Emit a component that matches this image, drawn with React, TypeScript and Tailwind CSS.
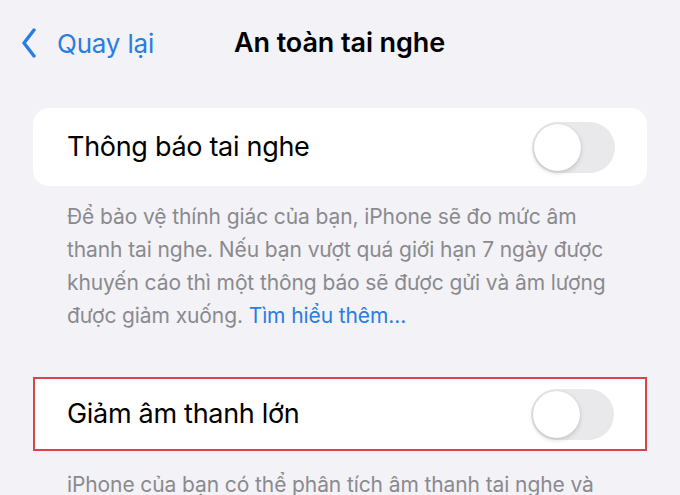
function Toggle() {
  return (
    <div className="relative h-[51px] w-[83px] rounded-full bg-[#e9e9ec]">
      <div className="absolute left-[2px] top-[2px] h-[47px] w-[47px] rounded-full bg-white shadow-[0_2px_5px_rgba(0,0,0,0.16),0_0_1px_rgba(0,0,0,0.12)]" />
    </div>
  );
}

function BackChevron() {
  return (
    <svg width="14" height="30" viewBox="0 0 14 30" fill="none">
      <polyline
        points="12,2 2,15 12,28"
        stroke="currentColor"
        strokeWidth="3.4"
        strokeLinecap="round"
        strokeLinejoin="round"
      />
    </svg>
  );
}

export default function App() {
  return (
    <div className="h-[495px] w-[680px] overflow-hidden bg-[#f2f2f7] font-['Inter',sans-serif]">
      {/* Thanh điều hướng */}
      <div className="flex h-[86px] items-center">
        <div className="ml-[22px] flex items-center text-[#2a7de1]">
          <BackChevron />
          <span className="ml-[21px] text-[26px] tracking-[-0.2px]">Quay lại</span>
        </div>
        <h1 className="ml-[80px] text-[27px] font-semibold tracking-[-0.1px] text-black">
          An toàn tai nghe
        </h1>
      </div>

      {/* Thông báo tai nghe */}
      <div className="mx-[33px] mt-[22px] flex h-[78px] items-center justify-between rounded-[16px] bg-white pl-[34px] pr-[32px]">
        <span className="text-[27px] tracking-[-0.3px] text-black">Thông báo tai nghe</span>
        <Toggle />
      </div>
      <p className="ml-[67px] mt-[14px] text-[21px] leading-[33px] tracking-[-0.1px] text-[#8a8a8e]">
        <span className="block">Để bảo vệ thính giác của bạn, iPhone sẽ đo mức âm</span>
        <span className="block">thanh tai nghe. Nếu bạn vượt quá giới hạn 7 ngày được</span>
        <span className="block">khuyến cáo thì một thông báo sẽ được gửi và âm lượng</span>
        <span className="block">
          được giảm xuống. <span className="text-[#2a7de1]">Tìm hiểu thêm...</span>
        </span>
      </p>

      {/* Giảm âm thanh lớn */}
      <div className="mx-[33px] mt-[45px] flex h-[74px] items-center justify-between border-2 border-[#d9434b] bg-white pl-[32px] pr-[31px]">
        <span className="text-[27px] tracking-[-0.3px] text-black">Giảm âm thanh lớn</span>
        <Toggle />
      </div>
      <p className="ml-[67px] mt-[17px] text-[21px] leading-[33px] tracking-[-0.1px] text-[#8a8a8e]">
        iPhone của bạn có thể phân tích âm thanh tai nghe và
      </p>
    </div>
  );
}
